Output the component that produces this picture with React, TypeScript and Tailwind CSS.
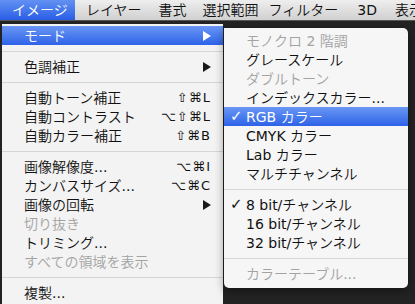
import React from 'react'

type Item =
  | { sep: true }
  | { sep?: false; label: string; shortcut?: string; arrow?: boolean; disabled?: boolean; active?: boolean; checked?: boolean }

const mainItems: Item[] = [
  { label: 'モード', arrow: true, active: true },
  { sep: true },
  { label: '色調補正', arrow: true },
  { sep: true },
  { label: '自動トーン補正', shortcut: '⇧⌘L' },
  { label: '自動コントラスト', shortcut: '⌥⇧⌘L' },
  { label: '自動カラー補正', shortcut: '⇧⌘B' },
  { sep: true },
  { label: '画像解像度...', shortcut: '⌥⌘I' },
  { label: 'カンバスサイズ...', shortcut: '⌥⌘C' },
  { label: '画像の回転', arrow: true },
  { label: '切り抜き', disabled: true },
  { label: 'トリミング...' },
  { label: 'すべての領域を表示', disabled: true },
  { sep: true },
  { label: '複製...' },
]

const modeItems: Item[] = [
  { label: 'モノクロ 2 階調', disabled: true },
  { label: 'グレースケール' },
  { label: 'ダブルトーン', disabled: true },
  { label: 'インデックスカラー...' },
  { label: 'RGB カラー', checked: true, active: true },
  { label: 'CMYK カラー' },
  { label: 'Lab カラー' },
  { label: 'マルチチャンネル' },
  { sep: true },
  { label: '8 bit/チャンネル', checked: true },
  { label: '16 bit/チャンネル' },
  { label: '32 bit/チャンネル' },
  { sep: true },
  { label: 'カラーテーブル...', disabled: true },
]

// menu bar titles, margins tuned to the reference spacing
const menuBar = [
  { label: 'レイヤー', cls: 'ml-[11px]' },
  { label: '書式', cls: 'ml-[17px]' },
  { label: '選択範囲', cls: 'ml-[16px]' },
  { label: 'フィルター', cls: 'ml-[10px]' },
  { label: '3D', cls: 'ml-[19px]' },
  { label: '表示', cls: 'ml-[18px]' },
]

const Arrow = ({ white }: { white?: boolean }) => (
  <svg width="8" height="10" viewBox="0 0 8 10" className="shrink-0">
    <polygon points="0,0 8,5 0,10" fill={white ? '#ffffff' : '#1a1a1a'} />
  </svg>
)

function Row({ item }: { item: Item }) {
  if (item.sep) {
    return (
      <div className="h-[12px] flex items-center">
        <div className="h-px w-full bg-[#d6d6d6]" />
      </div>
    )
  }
  const color = item.active ? 'text-white' : item.disabled ? 'text-[#a3a3a3]' : 'text-[#111111]'
  return (
    <div
      className={`relative h-[19px] flex items-center pl-[22px] pr-[12px] ${color} ${
        item.active ? 'bg-gradient-to-b from-[#6a96f3] to-[#2e62e8]' : ''
      }`}
    >
      {item.checked && (
        <span className="absolute left-[6px] top-0 h-[19px] flex items-center text-[15px] font-bold">
          ✓
        </span>
      )}
      <span className="flex-1 whitespace-nowrap">{item.label}</span>
      {item.shortcut && <span className="text-[13px] tracking-[1px]">{item.shortcut}</span>}
      {item.arrow && <Arrow white={item.active} />}
    </div>
  )
}

export default function App() {
  return (
    <div className="relative w-[415px] h-[304px] overflow-hidden bg-[#232323] text-[14px] leading-none font-['DejaVu_Sans','Noto_Sans_CJK_JP_DemiLight','Noto_Sans_CJK_JP',sans-serif]">
      {/* Menu bar */}
      <div className="h-[21px] flex items-center bg-gradient-to-b from-[#eeeeee] to-[#d0d0d0] border-b border-[#555555] text-[#111111] whitespace-nowrap">
        <div className="h-full w-[75px] shrink-0 flex items-center pl-3 text-white bg-gradient-to-b from-[#6390f2] to-[#2a5de6]">
          イメージ
        </div>
        {menuBar.map((m) => (
          <div key={m.label} className={`h-full flex items-center shrink-0 ${m.cls}`}>
            {m.label}
          </div>
        ))}
      </div>

      {/* Image menu */}
      <div className="mt-[3px] ml-[2px] w-[221px] h-[290px] bg-[#f3f3f3] pt-[2px]">
        {mainItems.map((item, i) => (
          <Row key={i} item={item} />
        ))}
      </div>

      {/* Mode submenu */}
      <div className="absolute left-[224px] top-[28px] w-[184px] h-[260px] bg-[#f6f6f6] rounded-tr-[5px] rounded-b-[5px] pt-[3px] shadow-[0_3px_10px_rgba(0,0,0,0.4)]">
        {modeItems.map((item, i) => (
          <Row key={i} item={item} />
        ))}
      </div>
    </div>
  )
}
